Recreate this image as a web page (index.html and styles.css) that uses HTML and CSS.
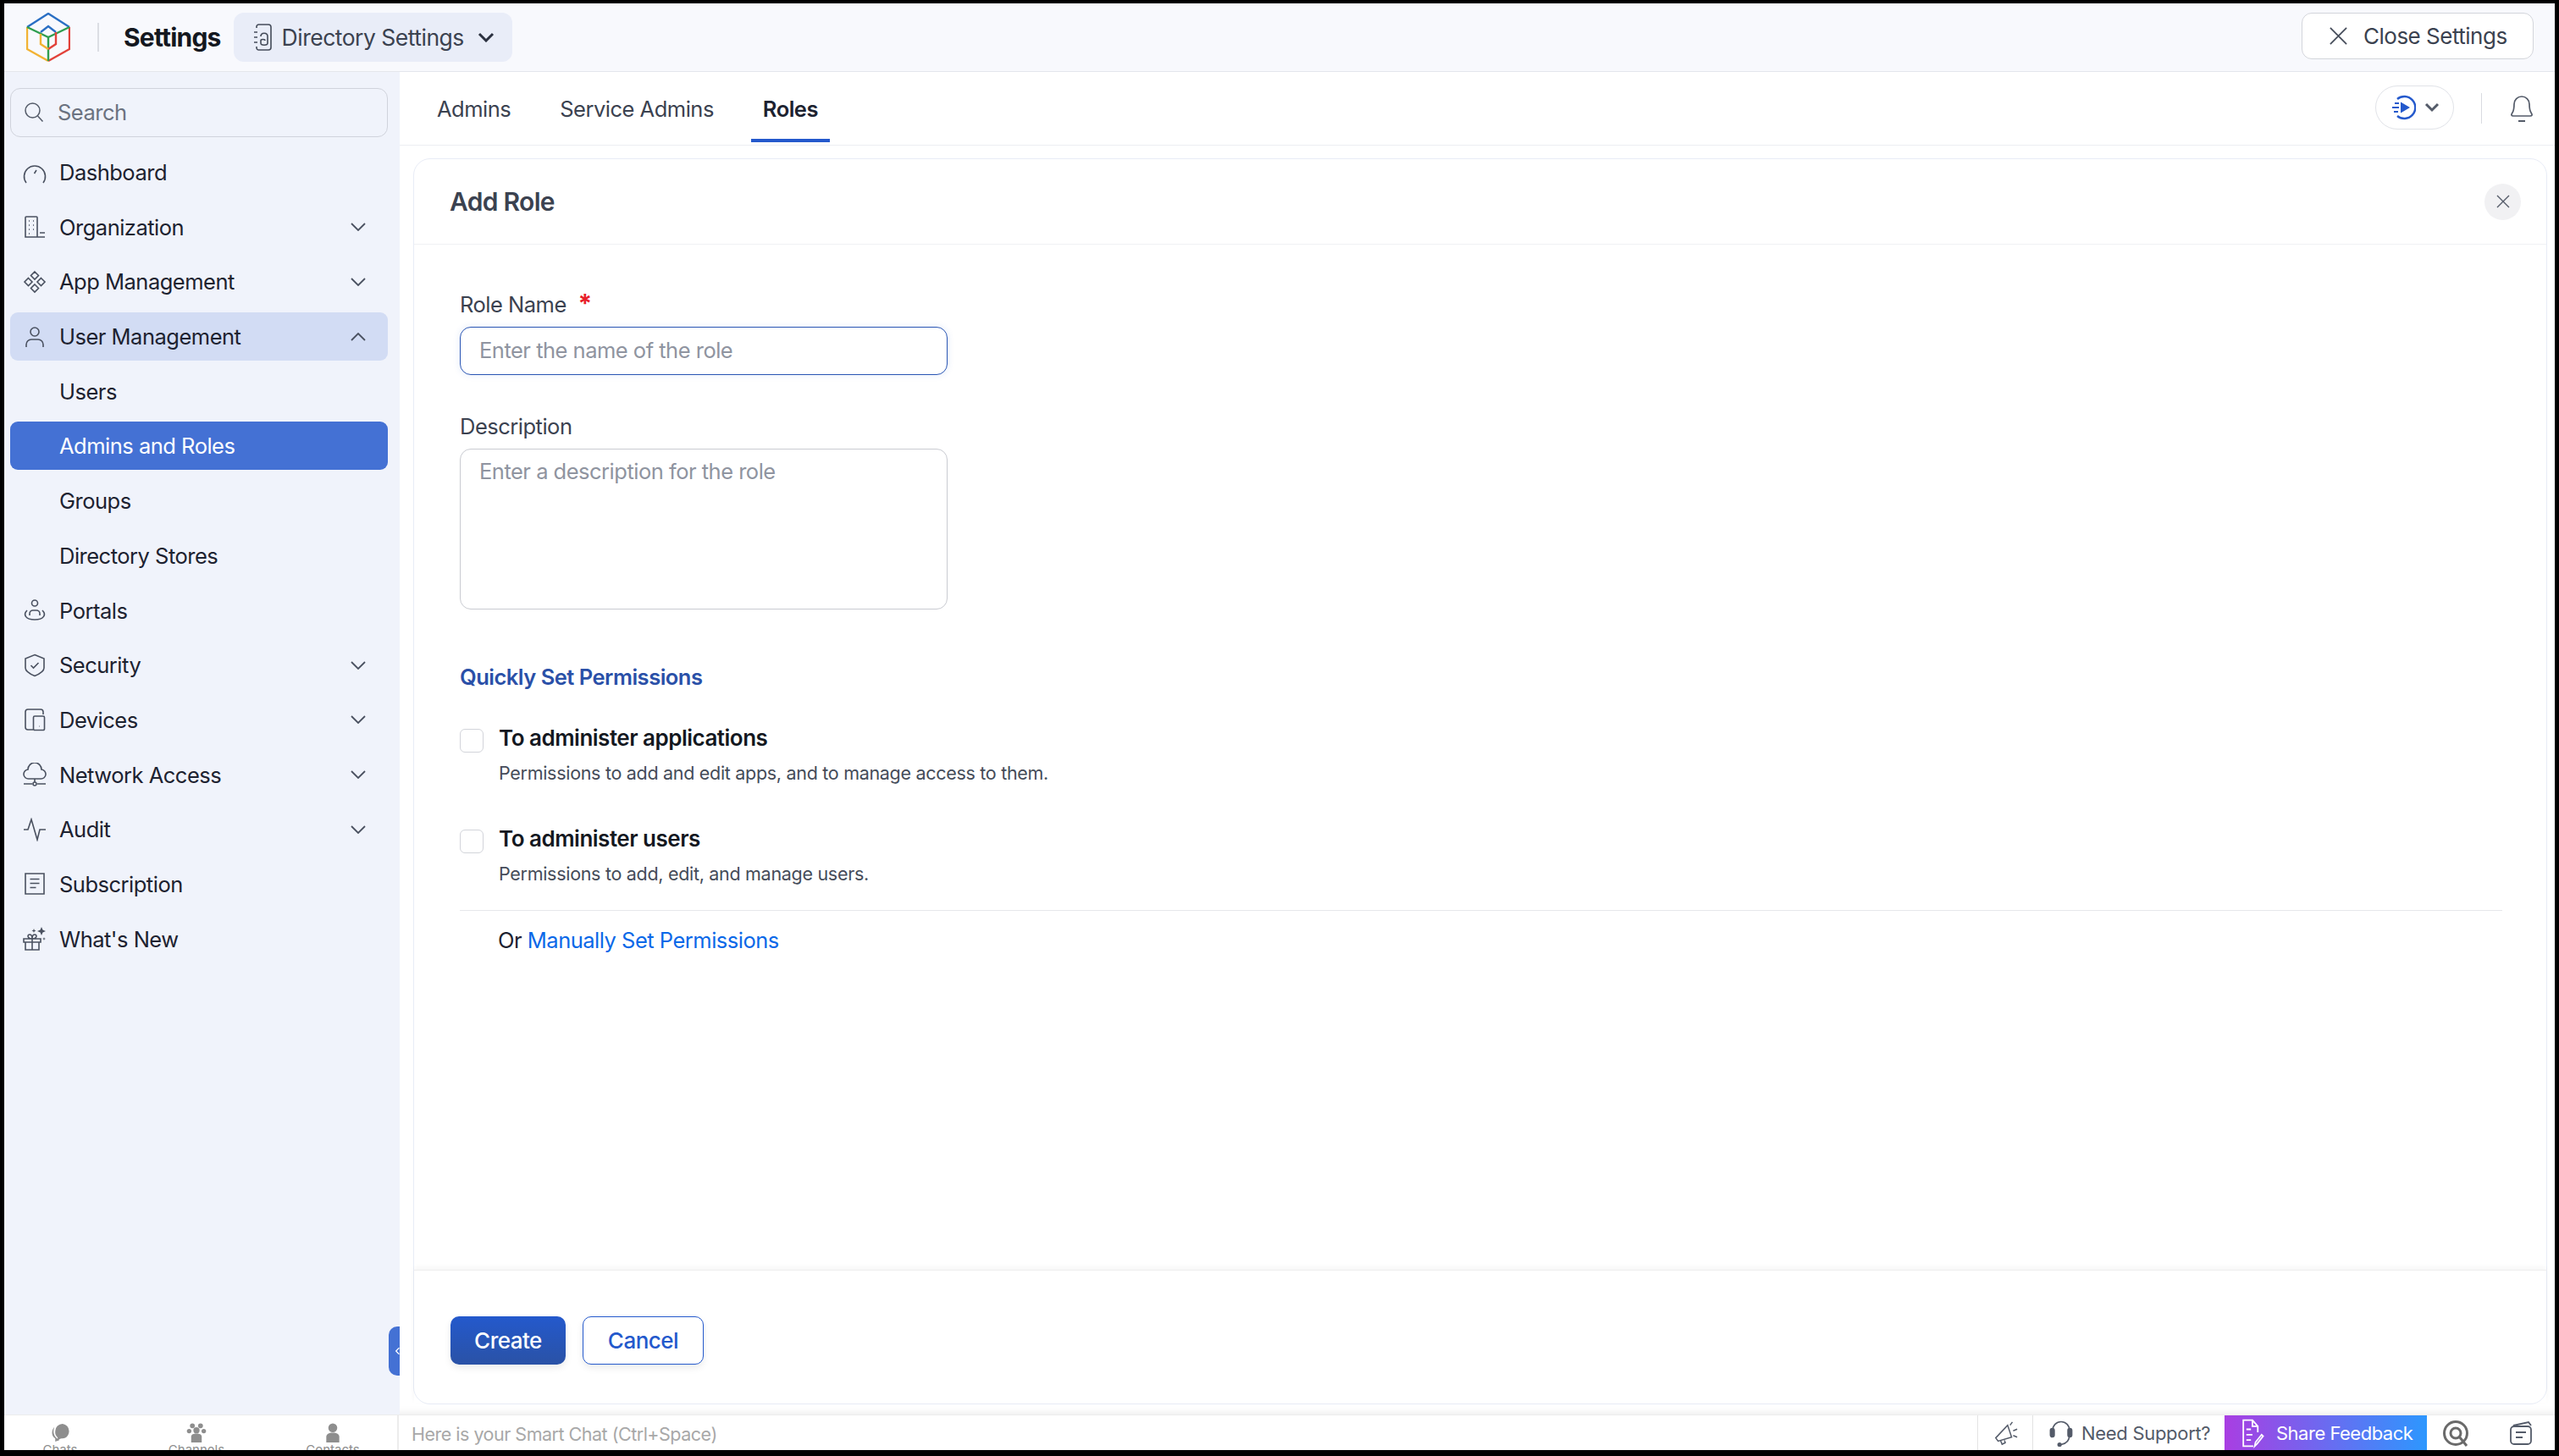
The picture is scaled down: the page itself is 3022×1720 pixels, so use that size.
FILE: index.html
```html
<!DOCTYPE html>
<html lang="en">
<head>
    <meta charset="UTF-8">
    <title>Settings - Add Role</title>
    <link rel="stylesheet" href="styles.css">
</head>
<body>
<div class="app">
    <header class="topbar">
        <svg class="logo" viewBox="0 0 52 58" fill="none" stroke-width="2.4">
            <path d="M1 17 26 1l25 16" stroke="#2a6fc4"/>
            <path d="M51 17v26L26 57" stroke="#e2423a"/>
            <path d="M1 17v26l25 14" stroke="#f2b233"/>
            <path d="M1 17l25 12 25-12M26 29v28" stroke="#2f9e4f"/>
            <path d="M17 23l9-7 9 7" stroke="#2a6fc4"/>
            <path d="M35 23v14l-9 6" stroke="#e2423a"/>
            <path d="M17 25v12l9 6" stroke="#f2b233"/>
        </svg>
        <span class="topbar-sep"></span>
        <span class="topbar-title">Settings</span>
        <div class="dir-pill">
            <svg class="dir-icon" viewBox="0 0 24 32" fill="none" stroke="#444b59" stroke-width="1.6">
                <path d="M5 5V3.500A2.500 2.500 0 0 1 7.500 1H19a3 3 0 0 1 3 3v24a3 3 0 0 1-3 3H7.500A2.500 2.500 0 0 1 5 28.500V27"/>
                <path d="M2 10h4M2 16h4M2 22h4"/>
                <path d="M10 15c0-5 8-5 8 0v8c0 3-8 3-8 0v-3c0-2 5-2 5 0"/>
            </svg>
            <span>Directory Settings</span>
            <svg class="dir-caret" viewBox="0 0 20 12" fill="none" stroke="#2b3140" stroke-width="3"><path d="M2 2l8 8 8-8"/></svg>
        </div>
        <button class="close-settings">
            <svg viewBox="0 0 24 24" fill="none" stroke="#444b59" stroke-width="1.8"><path d="M2 2l20 20M22 2 2 22"/></svg>
            Close Settings
        </button>
    </header>

    <div class="middle">
        <aside class="sidebar">
            <div class="search">
                <svg viewBox="0 0 24 24" fill="none" stroke="#545b69" stroke-width="1.5"><circle cx="10.500" cy="10.500" r="8.500"/><path d="M16.500 17l6 6.500"/></svg>
                <span>Search</span>
            </div>

            <div class="nav-item">
                <svg class="nav-icon" viewBox="0 0 28 28"><path d="M4 26A12.500 12.500 0 1 1 24 26M16 11l-2.500 4"/></svg>
                <span>Dashboard</span>
            </div>
            <div class="nav-item">
                <svg class="nav-icon" viewBox="0 0 28 28"><path d="M17 26H3V3a1 1 0 0 1 1-1h12a1 1 0 0 1 1 1v23zM17 26h9M20 21h6M7 7h1M12 7h1M7 12h1M12 12h1M7 17h1M12 17h1M7 22h1"/></svg>
                <span>Organization</span>
                <svg class="nav-caret" viewBox="0 0 18 10"><path d="M1 1l8 8 8-8"/></svg>
            </div>
            <div class="nav-item">
                <svg class="nav-icon" viewBox="0 0 28 28"><path d="M14 2l4.500 4.500L14 11 9.500 6.500zM14 17l4.500 4.500L14 26l-4.500-4.500zM6.500 9.500 11 14l-4.500 4.500L2 14zM21.500 9.500 26 14l-4.500 4.500L17 14z"/></svg>
                <span>App Management</span>
                <svg class="nav-caret" viewBox="0 0 18 10"><path d="M1 1l8 8 8-8"/></svg>
            </div>
            <div class="nav-item nav-open">
                <svg class="nav-icon" viewBox="0 0 28 28"><circle cx="14" cy="8" r="5"/><path d="M4 26v-3a6 6 0 0 1 6-6h8a6 6 0 0 1 6 6v3"/></svg>
                <span>User Management</span>
                <svg class="nav-caret" viewBox="0 0 18 10"><path d="M1 9l8-8 8 8"/></svg>
            </div>
            <div class="nav-item nav-sub"><span>Users</span></div>
            <div class="nav-item nav-sub nav-active"><span>Admins and Roles</span></div>
            <div class="nav-item nav-sub"><span>Groups</span></div>
            <div class="nav-item nav-sub"><span>Directory Stores</span></div>
            <div class="nav-item">
                <svg class="nav-icon" viewBox="0 0 28 28"><circle cx="14" cy="5.500" r="3.500"/><path d="M8 20v-2a4 4 0 0 1 4-4h4a4 4 0 0 1 4 4v2M5 14c-5 5-2 11 9 11s14-6 9-11"/></svg>
                <span>Portals</span>
            </div>
            <div class="nav-item">
                <svg class="nav-icon" viewBox="0 0 28 28"><path d="M14 1.500 25 6v11c0 4-5 7-11 9.500C8 24 3 21 3 17V6zM9.500 14l3 3 6-6"/></svg>
                <span>Security</span>
                <svg class="nav-caret" viewBox="0 0 18 10"><path d="M1 1l8 8 8-8"/></svg>
            </div>
            <div class="nav-item">
                <svg class="nav-icon" viewBox="0 0 28 28"><path d="M12 26H6a3 3 0 0 1-3-3V5a3 3 0 0 1 3-3h15a3 3 0 0 1 3 3v3M14 10h10a1.500 1.500 0 0 1 1.500 1.500V25a1.500 1.500 0 0 1-1.500 1.500H14a1.500 1.500 0 0 1-1.500-1.500V11.500A1.500 1.500 0 0 1 14 10zM19 22h.5"/></svg>
                <span>Devices</span>
                <svg class="nav-caret" viewBox="0 0 18 10"><path d="M1 1l8 8 8-8"/></svg>
            </div>
            <div class="nav-item">
                <svg class="nav-icon" viewBox="0 0 28 28"><path d="M7 19a5.500 5.500 0 0 1-1-11 8 8 0 0 1 16 0 5.500 5.500 0 0 1-1 11zM14 19v4M1 25h10M17 25h10"/><circle cx="14" cy="25" r="2"/></svg>
                <span>Network Access</span>
                <svg class="nav-caret" viewBox="0 0 18 10"><path d="M1 1l8 8 8-8"/></svg>
            </div>
            <div class="nav-item">
                <svg class="nav-icon" viewBox="0 0 28 28"><path d="M1 14h5l4-12 7 24 3-12h7"/></svg>
                <span>Audit</span>
                <svg class="nav-caret" viewBox="0 0 18 10"><path d="M1 1l8 8 8-8"/></svg>
            </div>
            <div class="nav-item">
                <svg class="nav-icon" viewBox="0 0 28 28"><path d="M3 2h22v24H3zM8.500 8.500h11M8.500 13.500h11M8.500 18.500h7"/></svg>
                <span>Subscription</span>
            </div>
            <div class="nav-item">
                <svg class="nav-icon" viewBox="0 0 28 28"><path d="M1 14h20v4H1zM3 18h16v9H3zM11 14v13M11 14c-6 0-6-5-3-5s3 5 3 5zM11 14c6 0 6-5 3-5s-3 5-3 5z"/><path class="nav-spark" d="M22 0l1.500 3.500L27 5l-3.500 1.500L22 10l-1.500-3.500L17 5l3.500-1.500zM13 2l.7 1.800 1.800.7-1.800.7L13 7l-.7-1.800-1.800-.7 1.800-.7zM25 12l.5 1.500 1.500.5-1.500.5L25 16l-.5-1.500-1.500-.5 1.500-.5z"/></svg>
                <span>What's New</span>
            </div>

            <button class="collapse-tab"><svg viewBox="0 0 8 14" fill="none" stroke="#fff" stroke-width="2"><path d="M7 1 1 7l6 6"/></svg></button>
        </aside>

        <main class="main">
            <div class="tabbar">
                <a class="tab">Admins</a>
                <a class="tab">Service Admins</a>
                <a class="tab tab-active">Roles</a>
                <div class="tabbar-right">
                    <div class="play-pill">
                        <svg class="play-icon" viewBox="0 0 30 30" fill="none" stroke="#2459cc" stroke-width="2.400">
                            <path d="M8 5a13 13 0 1 1 0 20"/>
                            <path d="M12 8.500 23 15l-11 6.500z" fill="#2459cc" stroke="none"/>
                            <path d="M5 10h5M2 15h8M4 20h5" stroke-width="1.800"/>
                        </svg>
                        <svg class="play-caret" viewBox="0 0 18 12" fill="none" stroke="#545b69" stroke-width="3"><path d="M2 2l7 7 7-7"/></svg>
                    </div>
                    <span class="tabbar-sep"></span>
                    <svg class="bell" viewBox="0 0 30 34" fill="none" stroke="#545b69" stroke-width="1.700"><path d="M4 22c2-3 2-6 2-10a9 9 0 0 1 18 0c0 4 0 7 2 10 2 3 1 4-1 4H5c-2 0-3-1-1-4z"/><path d="M11 32h8" stroke-width="2"/></svg>
                </div>
            </div>

            <div class="content">
                <section class="card">
                    <div class="card-head">
                        <h2>Add Role</h2>
                        <button class="card-close"><svg viewBox="0 0 18 18" fill="none" stroke="#545b69" stroke-width="1.400"><path d="M2 2l14 14M16 2 2 16"/></svg></button>
                    </div>

                    <form class="card-body">
                        <label class="field-label">Role Name <em>*</em></label>
                        <input class="field-input" type="text" placeholder="Enter the name of the role">
                        <label class="field-label field-next">Description</label>
                        <textarea class="field-area" placeholder="Enter a description for the role"></textarea>

                        <h3 class="section-title">Quickly Set Permissions</h3>
                        <div class="perm">
                            <span class="check"></span>
                            <div>
                                <div class="perm-title">To administer applications</div>
                                <div class="perm-desc">Permissions to add and edit apps, and to manage access to them.</div>
                            </div>
                        </div>
                        <div class="perm">
                            <span class="check"></span>
                            <div>
                                <div class="perm-title">To administer users</div>
                                <div class="perm-desc">Permissions to add, edit, and manage users.</div>
                            </div>
                        </div>
                        <div class="manual">Or <a>Manually Set Permissions</a></div>
                    </form>

                    <div class="card-foot">
                        <button class="btn btn-primary">Create</button>
                        <button class="btn btn-outline">Cancel</button>
                    </div>
                </section>
            </div>
        </main>
    </div>

    <footer class="chatbar">
        <div class="chat-tabs">
            <div class="chat-tab">
                <svg viewBox="0 0 24 24" fill="#8e8e8e"><path d="M15 1a9 9 0 0 1 8 9c0 5-3 9-8 9h-1c-2 0-3 1-5 3v-4a9 9 0 0 1-3-8 9 9 0 0 1 9-9z"/><path d="M5 5c-4 4-4 11 1 14v4l5-2-4-3C4 15 3 10 5 5z"/></svg>
                <span>Chats</span>
            </div>
            <div class="chat-tab">
                <svg viewBox="0 0 24 24" fill="#8e8e8e"><circle cx="7" cy="3.500" r="3"/><circle cx="17" cy="3.500" r="3"/><circle cx="3" cy="10" r="2.800"/><circle cx="21" cy="10" r="2.800"/><circle cx="12" cy="9" r="3.800"/><path d="M5.500 24v-7c0-3 3-4 6.500-4s6.500 1 6.500 4v7z"/></svg>
                <span>Channels</span>
            </div>
            <div class="chat-tab">
                <svg viewBox="0 0 24 24" fill="#8e8e8e"><circle cx="12" cy="6" r="5.500"/><path d="M4 24v-7c0-3 3-5 8-5s8 2 8 5v7z"/></svg>
                <span>Contacts</span>
            </div>
        </div>
        <div class="smart-chat">Here is your Smart Chat (Ctrl+Space)</div>
        <div class="chat-right">
            <div class="chat-cell cell-mega">
                <svg viewBox="0 0 32 32" fill="none" stroke="#545b69" stroke-width="1.600"><path d="M3 22 18 6l5 15-17 5zM9 25l2 5 4-2-1-3M21 6l3-4M25 13l5-2M25 19l5 2"/></svg>
            </div>
            <div class="chat-cell cell-support">
                <svg viewBox="0 0 30 40" fill="none" stroke="#545b69" stroke-width="1.800"><path d="M4 16a11 11 0 0 1 22 0v6c0 8-4 12-11 13"/><rect x="1" y="14" width="5" height="11" rx="2.500" fill="#545b69"/><rect x="24" y="14" width="5" height="11" rx="2.500" fill="#545b69"/><circle cx="13" cy="35" r="2" fill="#545b69"/></svg>
                <span>Need Support?</span>
            </div>
            <div class="chat-feedback">
                <svg viewBox="0 0 30 40" fill="none" stroke="#fff" stroke-width="2"><path d="M16 37H3V3h12l7 8v8M15 3v8h7M7 15h6M7 22h8M7 29h6"/><path d="M18 37l1-5 8-10 2 2-8 10z"/></svg>
                <span>Share Feedback</span>
            </div>
            <div class="chat-icons">
                <svg class="icon-at" viewBox="0 0 32 32" fill="none" stroke="#6a6a6a" stroke-width="3"><circle cx="16" cy="16" r="13.500"/><circle cx="16" cy="16" r="6"/><path d="M20 20l9 11"/></svg>
                <svg class="icon-notes" viewBox="0 0 28 30" fill="none" stroke="#545b69" stroke-width="1.800"><path d="M5 6l18-4 3 4"/><rect x="2" y="7" width="24" height="21" rx="4"/><path d="M8 14h12M8 20h8"/></svg>
            </div>
        </div>
    </footer>
</div>
</body>
</html>
```

FILE: styles.css
```css
* {
    box-sizing: border-box;
}
html, body {
    height: 100%;
}
body {
    margin: 0;
    padding: 4px 5px 7px 5px;
    background-color: #000;
    font-family: Inter, "Noto Sans", sans-serif;
    font-size: 25.500px;
    letter-spacing: -0.5px;
    color: #1d2230;
}
button, input, textarea {
    font: inherit;
    letter-spacing: inherit;
}
.app {
    display: flex;
    flex-direction: column;
    height: 100%;
    background-color: #fff;
    overflow: hidden;
}

/* top bar */
.topbar {
    display: flex;
    align-items: center;
    height: 81px;
    flex: none;
    padding: 0 25px 0 26px;
    background-color: #f8f9fd;
    border-bottom: 1px solid #e4e6ec;
}
.logo {
    width: 52px;
    height: 58px;
    flex: none;
}
.topbar-sep {
    width: 2px;
    height: 34px;
    margin: 0 29px 0 32px;
    background-color: #dcdee4;
}
.topbar-title {
    font-size: 30px;
    font-weight: 700;
    letter-spacing: -0.8px;
    color: #14181f;
}
.dir-pill {
    display: flex;
    align-items: center;
    width: 329px;
    height: 58px;
    margin-left: 15px;
    padding-left: 22px;
    border-radius: 12px;
    background-color: #e9edf8;
    color: #3b4250;
    font-size: 26.500px;
}
.dir-icon {
    width: 24px;
    height: 32px;
    margin-right: 11px;
}
.dir-caret {
    width: 20px;
    height: 12px;
    margin-left: 16px;
}
.close-settings {
    display: flex;
    align-items: center;
    width: 274px;
    height: 55px;
    margin-left: auto;
    margin-top: -3px;
    padding-left: 31px;
    border: 1px solid #d3d5db;
    border-radius: 12px;
    background-color: #fff;
    color: #3b4250;
    font-size: 26px;
}
.close-settings svg {
    width: 23px;
    height: 23px;
    margin-right: 18px;
}

.middle {
    display: flex;
    flex: 1;
    min-height: 0;
}

/* sidebar */
.sidebar {
    position: relative;
    width: 467px;
    flex: none;
    padding: 19px 14px 0 7px;
    background-color: #f0f3fb;
}
.search {
    display: flex;
    align-items: center;
    height: 58px;
    margin-bottom: 13px;
    padding: 0 0 2px 15px;
    border: 1px solid #d0d3dc;
    border-radius: 12px;
    color: #6b7280;
}
.search svg {
    width: 24px;
    height: 26px;
    margin-right: 16px;
}
.nav-item {
    display: flex;
    align-items: center;
    height: 57px;
    margin-bottom: 7.700px;
    padding: 0 26px 0 15px;
    border-radius: 9px;
    color: #1d2230;
}
.nav-icon {
    width: 28px;
    height: 28px;
    margin-right: 15px;
    flex: none;
    fill: none;
    stroke: #4a5160;
    stroke-width: 1.600;
}
.nav-spark {
    fill: #4a5160;
    stroke: none;
}
.nav-caret {
    width: 18px;
    height: 10px;
    margin-left: auto;
    fill: none;
    stroke: #4a5160;
    stroke-width: 1.800;
}
.nav-open {
    background-color: #d2dcf4;
}
.nav-sub {
    padding-left: 58px;
}
.nav-active {
    background-color: #4471d4;
    color: #fff;
}
.collapse-tab {
    position: absolute;
    right: 0;
    top: 1482px;
    display: flex;
    align-items: center;
    justify-content: flex-end;
    width: 13px;
    height: 58px;
    padding: 0;
    border: none;
    border-radius: 10px 0 0 10px;
    background-color: #4471d4;
}
.collapse-tab svg {
    width: 5px;
    height: 12px;
}

/* main area */
.main {
    display: flex;
    flex-direction: column;
    flex: 1;
    min-width: 0;
}
.tabbar {
    display: flex;
    align-items: flex-start;
    height: 87px;
    flex: none;
    padding: 0 24px 0 30px;
    border-bottom: 1px solid #eceef2;
}
.tab {
    display: flex;
    align-items: center;
    height: 83px;
    padding: 8px 14px 0;
    margin-right: 30px;
    border-bottom: 4px solid transparent;
    color: #3b4250;
}
.tab-active {
    border-bottom-color: #2459cc;
    color: #1d2230;
    font-weight: 600;
}
.tabbar-right {
    display: flex;
    align-items: center;
    height: 86px;
    margin-left: auto;
}
.play-pill {
    display: flex;
    align-items: center;
    justify-content: center;
    gap: 10px;
    width: 93px;
    height: 52px;
    margin-top: -3px;
    border: 1px solid #e1e3e8;
    border-radius: 26px;
}
.play-icon {
    width: 30px;
    height: 30px;
}
.play-caret {
    width: 18px;
    height: 12px;
}
.tabbar-sep {
    width: 1px;
    height: 36px;
    margin: 0 32px;
    background-color: #d9dbe0;
}
.bell {
    width: 30px;
    height: 34px;
}

.content {
    display: flex;
    flex: 1;
    min-height: 0;
    padding: 15px 9px 12px 16px;
    box-shadow: inset 0 -12px 10px -10px #ececec;
}
.card {
    display: flex;
    flex-direction: column;
    flex: 1;
    border: 1px solid #e8ecf6;
    border-radius: 20px;
    background-color: #fff;
}
.card-head {
    display: flex;
    align-items: center;
    justify-content: space-between;
    height: 101px;
    flex: none;
    padding: 0 30px 0 42px;
    border-bottom: 1px solid #f0f1f4;
}
.card-head h2 {
    margin: 0;
    font-size: 30px;
    font-weight: 600;
    letter-spacing: -0.7px;
    color: #3b4250;
}
.card-close {
    display: flex;
    align-items: center;
    justify-content: center;
    width: 43px;
    height: 43px;
    padding: 0;
    border: none;
    border-radius: 50%;
    background-color: #f1f1f3;
}
.card-close svg {
    width: 18px;
    height: 18px;
}
.card-body {
    display: flex;
    flex-direction: column;
    flex: 1;
    padding: 56px 52px 0 54px;
}
.field-label {
    height: 30px;
    line-height: 30px;
    color: #3b4250;
}
.field-label em {
    margin-left: 7px;
    color: #e8202a;
    font-size: 30px;
    line-height: 0;
    font-style: normal;
    font-weight: 700;
}
.field-next {
    margin-top: 46px;
}
.field-input, .field-area {
    display: block;
    width: 576px;
    margin-top: 11px;
    padding: 0 22px;
    border: 1px solid #c9cbd1;
    border-radius: 13px;
    outline: none;
    color: #1d2230;
}
.field-input {
    height: 57px;
    padding-bottom: 2px;
    border-color: #2a56b4;
    box-shadow: 0 0 8px rgba(36, 89, 204, 0.12);
}
.field-area {
    height: 190px;
    padding-top: 10px;
    resize: none;
}
.field-input::placeholder, .field-area::placeholder {
    color: #8f94a0;
}
.section-title {
    margin: 65px 0 0;
    line-height: 30px;
    font-size: 25.500px;
    font-weight: 600;
    color: #2a50a8;
}
.perm {
    display: flex;
    height: 71px;
    margin-top: 48px;
}
.section-title + .perm {
    margin-top: 42px;
}
.check {
    width: 28px;
    height: 28px;
    margin: 4px 18px 0 0;
    flex: none;
    border: 1px solid #d2d4da;
    border-radius: 6px;
}
.perm-title {
    line-height: 30px;
    font-size: 26px;
    font-weight: 600;
    color: #14181f;
}
.perm-desc {
    margin-top: 12px;
    line-height: 28px;
    font-size: 21.500px;
    letter-spacing: -0.3px;
    color: #454c59;
}
.manual {
    margin-top: 28px;
    padding: 20px 0 0 45px;
    border-top: 1px solid #e6e7eb;
    line-height: 30px;
    color: #1d2230;
}
.manual a {
    color: #0a68e8;
}
.card-foot {
    display: flex;
    align-items: center;
    gap: 20px;
    height: 158px;
    flex: none;
    padding: 8px 0 0 43px;
    border-top: 1px solid #eeeeee;
    box-shadow: 0 -3px 6px rgba(0, 0, 0, 0.04);
}
.btn {
    height: 57px;
    border-radius: 10px;
    font-size: 26px;
    font-weight: 500;
    box-shadow: 0 4px 8px rgba(0, 0, 0, 0.08);
}
.btn-primary {
    width: 136px;
    border: none;
    background: linear-gradient(#2459cc, #2a52a6);
    color: #fff;
}
.btn-outline {
    width: 143px;
    border: 1px solid #2459cc;
    background-color: #fff;
    color: #2459cc;
}

/* bottom chat bar */
.chatbar {
    display: flex;
    align-items: stretch;
    height: 42px;
    flex: none;
    border-top: 1px solid #ececec;
    background-color: #fff;
    overflow: hidden;
    font-size: 22px;
    letter-spacing: -0.3px;
}
.chat-tabs {
    display: flex;
    gap: 81px;
    width: 466px;
    flex: none;
    padding: 9px 0 0 26px;
    border-right: 2px solid #ececec;
}
.chat-tab {
    display: flex;
    flex-direction: column;
    align-items: center;
    width: 80px;
    color: #8e8e8e;
    font-size: 15px;
    line-height: 18px;
    letter-spacing: 0;
}
.chat-tab svg {
    width: 26px;
    height: 23px;
    flex: none;
}
.smart-chat {
    display: flex;
    align-items: center;
    padding: 2px 0 0 15px;
    color: #a8a8a8;
    font-size: 21.500px;
    letter-spacing: -0.5px;
}
.chat-right {
    display: flex;
    margin-left: auto;
}
.chat-cell {
    display: flex;
    align-items: center;
    border-left: 1px solid #e3e3e3;
}
.cell-mega {
    width: 65px;
    padding-left: 18px;
}
.cell-mega svg {
    width: 30px;
    height: 32px;
}
.cell-support {
    width: 227px;
    padding-left: 18px;
    color: #545b69;
}
.cell-support svg {
    width: 30px;
    height: 36px;
    margin-right: 9px;
}
.chat-feedback {
    display: flex;
    align-items: center;
    width: 239px;
    padding-left: 18px;
    background: linear-gradient(90deg, #a93ee2, #2d97fe);
    color: #fff;
    letter-spacing: -0.5px;
}
.chat-feedback svg {
    width: 30px;
    height: 36px;
    margin-right: 13px;
}
.chat-icons {
    display: flex;
    align-items: center;
    width: 151px;
    padding: 0 26px 0 18px;
}
.icon-at {
    width: 32px;
    height: 32px;
}
.icon-notes {
    width: 28px;
    height: 30px;
    margin-left: auto;
}
```
